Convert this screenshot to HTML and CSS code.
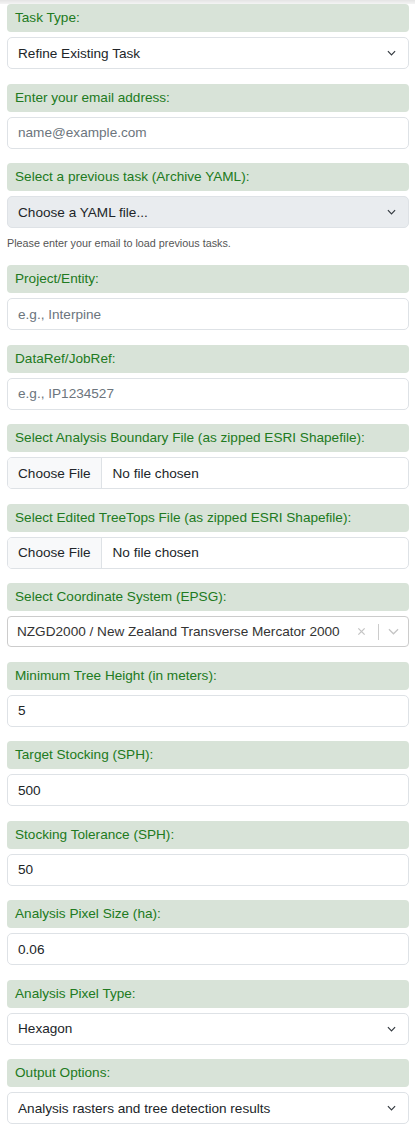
FILE: index.html
```html
<!DOCTYPE html>
<html lang="en">
<head>
<meta charset="utf-8">
<title>Task Form</title>
<link rel="stylesheet" href="styles.css">
</head>
<body>
<div class="topband"></div>
<form class="form">
  <div class="group">
    <div class="label">Task Type:</div>
    <div class="control select"><span>Refine Existing Task</span><svg class="chev" viewBox="0 0 10 6" width="9" height="6"><path d="M1 1l4 4 4-4" fill="none" stroke="#343a40" stroke-width="1.3"/></svg></div>
  </div>
  <div class="group">
    <div class="label">Enter your email address:</div>
    <div class="control"><span class="ph">name@example.com</span></div>
  </div>
  <div class="group with-help">
    <div class="label">Select a previous task (Archive YAML):</div>
    <div class="control select disabled"><span>Choose a YAML file...</span><svg class="chev" viewBox="0 0 10 6" width="9" height="6"><path d="M1 1l4 4 4-4" fill="none" stroke="#343a40" stroke-width="1.3"/></svg></div>
    <div class="help">Please enter your email to load previous tasks.</div>
  </div>
  <div class="group">
    <div class="label">Project/Entity:</div>
    <div class="control"><span class="ph">e.g., Interpine</span></div>
  </div>
  <div class="group">
    <div class="label">DataRef/JobRef:</div>
    <div class="control"><span class="ph">e.g., IP1234527</span></div>
  </div>
  <div class="group">
    <div class="label">Select Analysis Boundary File (as zipped ESRI Shapefile):</div>
    <div class="control file"><span class="filebtn">Choose File</span><span class="filename">No file chosen</span></div>
  </div>
  <div class="group">
    <div class="label">Select Edited TreeTops File (as zipped ESRI Shapefile):</div>
    <div class="control file"><span class="filebtn">Choose File</span><span class="filename">No file chosen</span></div>
  </div>
  <div class="group">
    <div class="label">Select Coordinate System (EPSG):</div>
    <div class="control rselect">
      <span class="rval">NZGD2000 / New Zealand Transverse Mercator 2000</span>
      <span class="rind">
        <svg class="rx" viewBox="0 0 10 10" width="9" height="9"><path d="M1.5 1.5l7 7M8.5 1.5l-7 7" fill="none" stroke="#c4c4c4" stroke-width="1.4"/></svg>
        <span class="rsep"></span>
        <svg class="rchev" viewBox="0 0 12 7" width="11" height="7"><path d="M1 1l5 5 5-5" fill="none" stroke="#c4c4c4" stroke-width="1.3"/></svg>
      </span>
    </div>
  </div>
  <div class="group">
    <div class="label">Minimum Tree Height (in meters):</div>
    <div class="control"><span>5</span></div>
  </div>
  <div class="group">
    <div class="label">Target Stocking (SPH):</div>
    <div class="control"><span>500</span></div>
  </div>
  <div class="group">
    <div class="label">Stocking Tolerance (SPH):</div>
    <div class="control"><span>50</span></div>
  </div>
  <div class="group">
    <div class="label">Analysis Pixel Size (ha):</div>
    <div class="control"><span>0.06</span></div>
  </div>
  <div class="group">
    <div class="label">Analysis Pixel Type:</div>
    <div class="control select"><span>Hexagon</span><svg class="chev" viewBox="0 0 10 6" width="9" height="6"><path d="M1 1l4 4 4-4" fill="none" stroke="#343a40" stroke-width="1.3"/></svg></div>
  </div>
  <div class="group">
    <div class="label">Output Options:</div>
    <div class="control select"><span>Analysis rasters and tree detection results</span><svg class="chev" viewBox="0 0 10 6" width="9" height="6"><path d="M1 1l4 4 4-4" fill="none" stroke="#343a40" stroke-width="1.3"/></svg></div>
  </div>
</form>
</body>
</html>
```

FILE: styles.css
```css
* { box-sizing: border-box; }
html, body {
  margin: 0;
  padding: 0;
  background: #ffffff;
  font-family: "Liberation Sans", Arial, sans-serif;
  color: #212529;
}
.topband {
  height: 4px;
  background: linear-gradient(#e4e4e4, #f4f4f4);
}
.form {
  padding: 0 6px 0 7px;
  display: flex;
  flex-direction: column;
}
.group {
  display: flex;
  flex-direction: column;
  gap: 5px;
  margin-bottom: 14.5px;
}
.group.with-help { margin-bottom: 0; }
.label {
  background: #d8e3d8;
  color: #217a21;
  font-size: 13.6px;
  line-height: 18px;
  padding: 5px 8px;
  border-radius: 4px;
}
.control {
  height: 32px;
  border: 1px solid #dee2e6;
  border-radius: 5px;
  background: #fff;
  display: flex;
  align-items: center;
  padding: 0 10px;
  font-size: 13.6px;
  color: #212529;
}
.ph { color: #6c757d; }
.select { justify-content: space-between; padding-right: 12px; }
.select.disabled { background: #e9ecef; }
.chev { display: block; }
.help {
  font-size: 10.8px;
  color: #555;
  line-height: 14px;
  margin-top: 3px;
  height: 29px;
}
.file { padding: 0; overflow: hidden; }
.filebtn {
  height: 100%;
  display: flex;
  align-items: center;
  padding: 0 10px;
  background: #f8f9fa;
  border-right: 1px solid #dee2e6;
  white-space: nowrap;
  flex: none;
}
.filename { padding-left: 11px; white-space: nowrap; }
.rselect {
  justify-content: space-between;
  padding: 0 0 0 9px;
  border-color: #cccccc;
  border-radius: 4px;
  height: 31px;
}
.rval { color: #333; white-space: nowrap; }
.rind {
  display: flex;
  align-items: center;
  height: 100%;
}
.rx { margin: 0 8px 0 8px; }
.rsep {
  width: 1px;
  height: 16px;
  background: #cccccc;
  margin: 0 9px 0 4px;
}
.rchev { margin-right: 9px; }
```
